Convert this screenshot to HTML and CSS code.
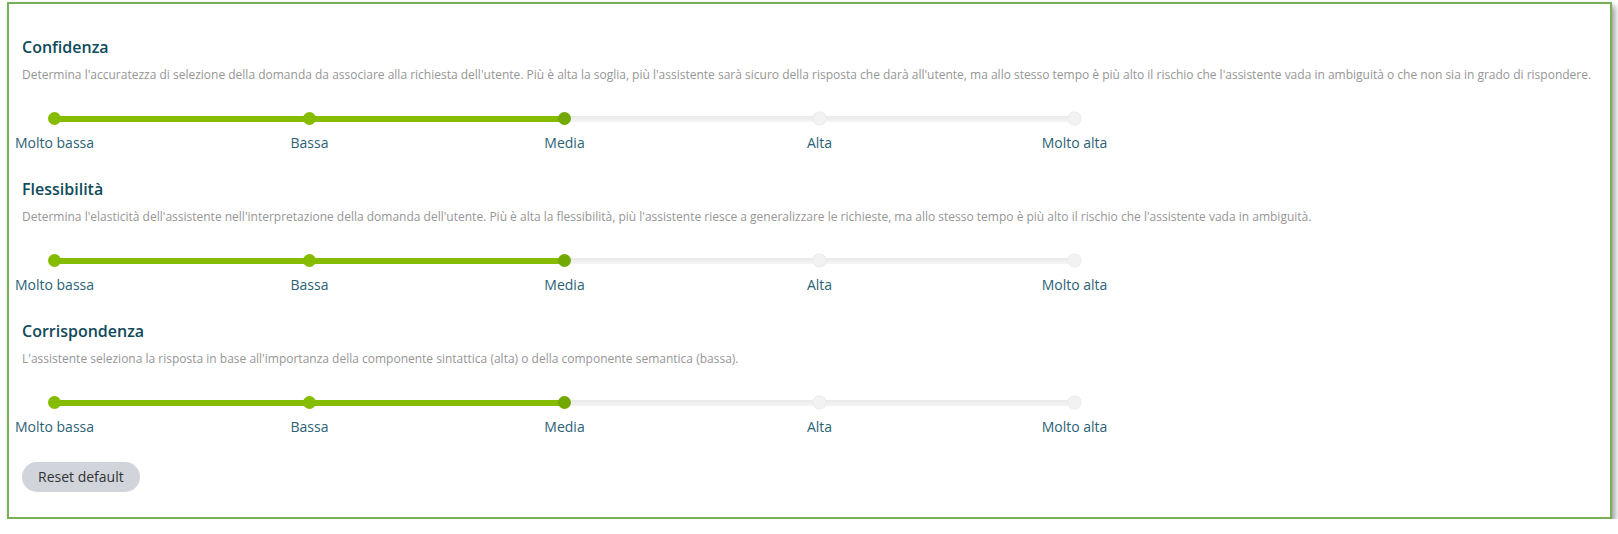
FILE: index.html
```html
<!DOCTYPE html>
<html lang="it">
<head>
<meta charset="utf-8">
<title>Impostazioni assistente</title>
<link rel="stylesheet" href="styles.css">
</head>
<body>
<div class="frame">
  <section class="setting">
    <h2 class="title">Confidenza</h2>
    <p class="desc">Determina l'accuratezza di selezione della domanda da associare alla richiesta dell'utente. Più è alta la soglia, più l'assistente sarà sicuro della risposta che darà all'utente, ma allo stesso tempo è più alto il rischio che l'assistente vada in ambiguità o che non sia in grado di rispondere.</p>
    <div class="track">
      <div class="rail"><div class="fill" style="width:50%"></div></div>
      <span class="dot on"></span><span class="dot on"></span><span class="dot handle"></span><span class="dot"></span><span class="dot"></span>
    </div>
    <div class="labels"><span>Molto bassa</span><span>Bassa</span><span>Media</span><span>Alta</span><span>Molto alta</span></div>
  </section>
  <section class="setting">
    <h2 class="title">Flessibilità</h2>
    <p class="desc">Determina l'elasticità dell'assistente nell'interpretazione della domanda dell'utente. Più è alta la flessibilità, più l'assistente riesce a generalizzare le richieste, ma allo stesso tempo è più alto il rischio che l'assistente vada in ambiguità.</p>
    <div class="track">
      <div class="rail"><div class="fill" style="width:50%"></div></div>
      <span class="dot on"></span><span class="dot on"></span><span class="dot handle"></span><span class="dot"></span><span class="dot"></span>
    </div>
    <div class="labels"><span>Molto bassa</span><span>Bassa</span><span>Media</span><span>Alta</span><span>Molto alta</span></div>
  </section>
  <section class="setting">
    <h2 class="title">Corrispondenza</h2>
    <p class="desc">L'assistente seleziona la risposta in base all'importanza della componente sintattica (alta) o della componente semantica (bassa).</p>
    <div class="track">
      <div class="rail"><div class="fill" style="width:50%"></div></div>
      <span class="dot on"></span><span class="dot on"></span><span class="dot handle"></span><span class="dot"></span><span class="dot"></span>
    </div>
    <div class="labels"><span>Molto bassa</span><span>Bassa</span><span>Media</span><span>Alta</span><span>Molto alta</span></div>
  </section>
  <button class="reset" type="button">Reset default</button>
</div>
</body>
</html>
```
FILE: styles.css
```css
html, body {
  margin: 0;
  padding: 0;
  background: #ffffff;
}
body {
  font-family: "Open Sans", "Liberation Sans", sans-serif;
}
.frame {
  margin: 2px 6px 0 7px;
  border: 2px solid #78b05a;
  box-shadow: 3px 4px 6px rgba(0, 0, 0, 0.4);
  padding: 31.5px 13px 25.5px 13px;
  background: #fff;
  display: flex;
  flex-direction: column;
  align-items: flex-start;
  gap: 25px;
}
.setting {
  display: flex;
  flex-direction: column;
  align-items: flex-start;
}
.title {
  margin: 0 0 8px 0;
  font-size: 16px;
  line-height: 22px;
  font-weight: 600;
  color: #0f4a5b;
}
.desc {
  margin: 0 0 28.5px 0;
  font-size: 12px;
  line-height: 18px;
  font-weight: 400;
  color: #969696;
  white-space: nowrap;
}
.track {
  position: relative;
  width: 1033px;
  height: 13px;
  margin: 0 0 7.5px 26px;
  display: flex;
  justify-content: space-between;
  align-items: center;
}
.rail {
  position: absolute;
  left: 6.5px;
  right: 6.5px;
  top: 3.5px;
  height: 6px;
  border-radius: 3px;
  background: linear-gradient(#e9e9e9, #f5f5f5);
}
.fill {
  height: 100%;
  border-radius: 3px;
  background: #86bc00;
}
.dot {
  position: relative;
  width: 13px;
  height: 13px;
  border-radius: 50%;
  background: #f2f2f2;
  box-shadow: 0 0 0 0.5px #e6e6e6;
}
.dot.on {
  background: #86bc00;
  box-shadow: none;
}
.dot.handle {
  background: #72a800;
  box-shadow: none;
}
.labels {
  width: 1100px;
  margin-left: -7.5px;
  display: flex;
  justify-content: space-between;
}
.labels span {
  width: 80px;
  text-align: center;
  white-space: nowrap;
  font-size: 14px;
  line-height: 20px;
  color: #2b6275;
}
.reset {
  height: 30px;
  padding: 0 16px;
  border: none;
  border-radius: 15px;
  background: #d1d5db;
  font-family: "Open Sans", "Liberation Sans", sans-serif;
  font-size: 14px;
  color: #333;
  cursor: pointer;
}
```
